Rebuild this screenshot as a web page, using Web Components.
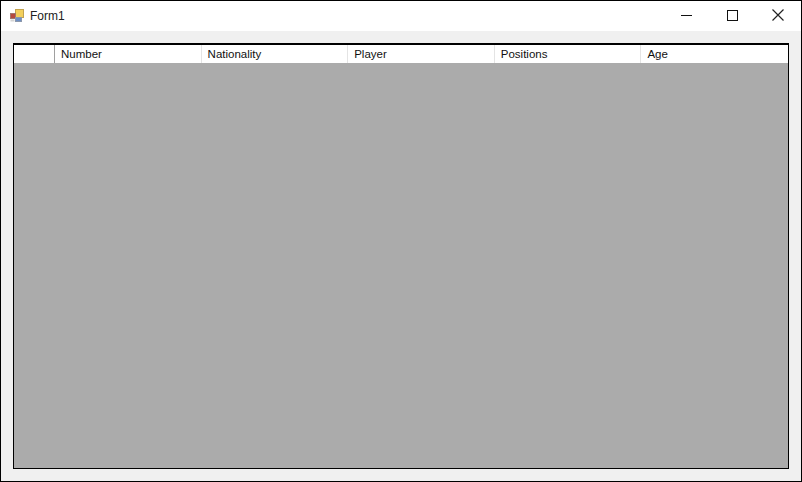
<!DOCTYPE html>
<html>
<head>
<meta charset="utf-8">
<title>Form1</title>
<style>
  html, body { margin: 0; padding: 0; height: 100%; }
  body { background: #f0f0f0; font-family: "Liberation Sans", "Noto Sans CJK JP", sans-serif; overflow: hidden; }
</style>
</head>
<body>
<win-form caption="Form1">
  <data-grid columns="Number,Nationality,Player,Positions,Age"></data-grid>
</win-form>

<script>
// title bar with icon and window buttons
class WinTitlebar extends HTMLElement {
  constructor() {
    super();
    this.attachShadow({ mode: 'open' });
    this.shadowRoot.innerHTML = `
      <style>
        :host { display: flex; align-items: flex-start; box-sizing: border-box; height: 30px; padding-right: 1px; background: #fff; color: #222; }
        .icon { display: block; margin: 8px 0 0 9px; }
        .caption { margin: 8px 0 0 6px; font-size: 12px; line-height: 14px; }
        .spacer { flex: 1; }
        .btn { display: flex; align-items: center; justify-content: center; width: 45px; height: 28px; }
        .btn.min { margin-right: 1px; }
        svg { display: block; }
      </style>
      <svg class="icon" width="14" height="14" viewBox="0 0 14 14">
        <rect x="5.5" y="0.5" width="8" height="8" fill="#f2cf5c" stroke="#c2a24e"/>
        <rect x="0.5" y="4.5" width="5" height="5" fill="#b5493f" stroke="#a0766c"/>
        <rect x="5.5" y="8.5" width="6" height="4" fill="#6d8fc4" stroke="#8b97ab"/>
        <rect x="0.5" y="10.5" width="4" height="2" fill="#d4d4d4"/>
      </svg>
      <span class="caption">${this.getAttribute('caption') || ''}</span>
      <span class="spacer"></span>
      <span class="btn min"><svg width="11" height="11" viewBox="0 0 11 11"><path d="M0 5.5H11" stroke="#111" fill="none"/></svg></span>
      <span class="btn"><svg width="11" height="11" viewBox="0 0 11 11"><rect x="0.5" y="0.5" width="10" height="10" stroke="#111" fill="none"/></svg></span>
      <span class="btn"><svg width="12" height="12" viewBox="0 0 12 12"><path d="M0.5 0.5L11.5 11.5M11.5 0.5L0.5 11.5" stroke="#222" stroke-width="1.2" fill="none"/></svg></span>
    `;
  }
}
customElements.define('win-titlebar', WinTitlebar);

// the window frame
class WinForm extends HTMLElement {
  constructor() {
    super();
    this.attachShadow({ mode: 'open' });
    this.shadowRoot.innerHTML = `
      <style>
        :host { display: flex; flex-direction: column; box-sizing: border-box; width: 802px; height: 482px; border: 1px solid #000; background: #f0f0f0; }
        .client { flex: 1; display: flex; padding: 12px; min-height: 0; }
      </style>
      <win-titlebar caption="${this.getAttribute('caption') || ''}"></win-titlebar>
      <div class="client"><slot></slot></div>
    `;
  }
}
customElements.define('win-form', WinForm);

// empty DataGridView: header row over grey background
class DataGrid extends HTMLElement {
  constructor() {
    super();
    this.attachShadow({ mode: 'open' });
    const cols = (this.getAttribute('columns') || '').split(',');
    this.shadowRoot.innerHTML = `
      <style>
        :host { display: flex; flex-direction: column; flex: 1; box-sizing: border-box; border: 1px solid #000; border-top-width: 2px; background: #ababab; }
        .head { display: grid; grid-template-columns: 41px repeat(5, 146.6px); height: 18px; background: #fff; color: #111; font-size: 11.5px; line-height: 18px; }
        .cell { box-sizing: border-box; padding-left: 6px; border-right: 1px solid #e4e4e4; white-space: nowrap; overflow: hidden; }
        .cell.corner { border-right-color: #a0a0a0; }
        .cell:last-child { border-right: 0; }
      </style>
      <div class="head">
        <div class="cell corner"></div>
        ${cols.map(c => `<div class="cell">${c}</div>`).join('')}
      </div>
    `;
  }
}
customElements.define('data-grid', DataGrid);
</script>
</body>
</html>
